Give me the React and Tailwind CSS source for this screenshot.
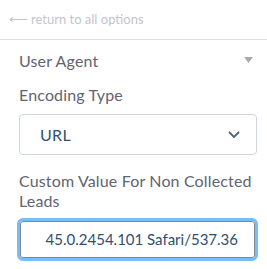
import React from 'react'

const agent = '45.0.2454.101 Safari/537.36'

function App() {
  return (
    <div className="w-[267px] h-[269px] bg-white overflow-hidden font-['Lato',sans-serif]">
      <div className="h-[40px] border-b border-[#dcdce6] flex items-center pl-[9px] text-[13px] text-[#c4c4cc]">
        <span className="mr-[3px]">⟵</span>
        <span>return to all options</span>
      </div>

      <div className="pl-[19px] pr-[10px]">
        <div className="h-[41px] flex items-center justify-between text-[16px] tracking-[0.15px] text-[#5f6470]">
          <span>User Agent</span>
          <svg width="9" height="7" viewBox="0 0 9 7" className="mr-[4px]">
            <path d="M0 0 H9 L4.5 6 Z" fill="#a9a9b0" />
          </svg>
        </div>

        <div className="mt-[4px] text-[16px] leading-[20px] tracking-[0.15px] text-[#5f6470]">Encoding Type</div>

        <div className="mt-[9px] h-[41px] border border-[#cfd5de] rounded-[4px] flex items-center justify-between pl-[20px] pr-[16px]">
          <span className="text-[16px] tracking-[0.3px] text-[#2f4f72]">URL</span>
          <svg width="12" height="8" viewBox="0 0 12 8">
            <path d="M1 1 L6 6 L11 1" fill="none" stroke="#4e6580" strokeWidth="1.8" />
          </svg>
        </div>

        <div className="mt-[16px] text-[16px] leading-[20px] tracking-[0.15px] text-[#5f6470]">
          Custom Value For Non Collected Leads
        </div>

        <div className="mt-[7px] ml-[-2px] mr-[-1px] h-[43px] rounded-[6px] border-[3px] border-[#78bdf5] flex">
          <div className="flex-1 min-w-0 rounded-[3px] border border-[#7d8898] flex items-center justify-end overflow-hidden pr-[16px] pl-[12px]">
            <span className="whitespace-nowrap text-[15px] text-[#2f4f72]">{agent}</span>
          </div>
        </div>
      </div>
    </div>
  )
}

export default App
